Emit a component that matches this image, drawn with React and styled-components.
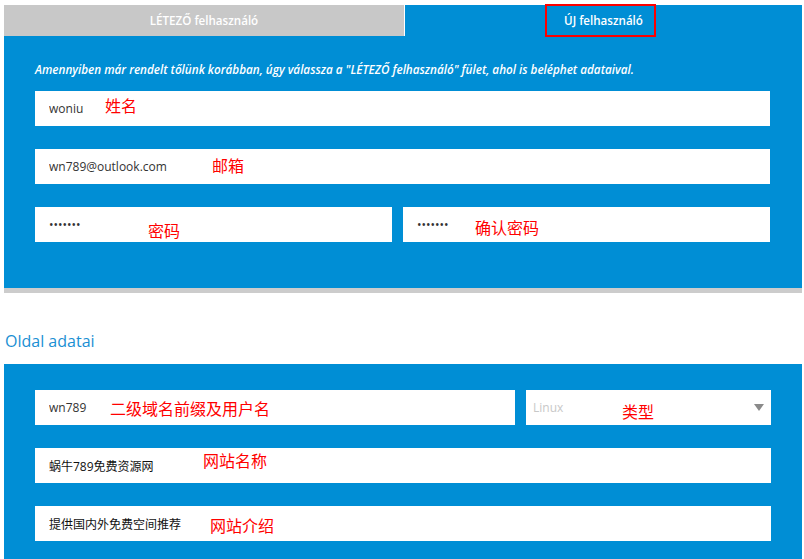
import React from "react";
import styled, { createGlobalStyle } from "styled-components";

const GlobalStyle = createGlobalStyle`
  body {
    margin: 0;
    background: #ffffff;
    font-family: "Open Sans", "Noto Sans CJK SC", sans-serif;
  }
`;

const BLUE = "#008ed5";

const Page = styled.div`
  padding: 5px 2px 0 4px;
`;

const Tabs = styled.div`
  display: flex;
  gap: 1px;
`;

const Tab = styled.div`
  position: relative;
  width: ${(props) => props.width}px;
  height: 31px;
  display: flex;
  align-items: center;
  justify-content: center;
  background: ${(props) => (props.active ? BLUE : "#c8c8c8")};
  color: #ffffff;
  font-size: 11.6px;
  font-weight: 600;
`;

/* piros keret a kiemelt fül körül */
const Highlight = styled.span`
  position: absolute;
  left: 140px;
  top: -1px;
  width: 111px;
  height: 33px;
  box-sizing: border-box;
  border: 2px solid #ff0000;
`;

const Panel = styled.div`
  background: ${BLUE};
  padding: ${(props) => props.pad};
  box-shadow: ${(props) => (props.shadow ? "0 5px 0 #cccccc" : "none")};
`;

const Notice = styled.p`
  margin: 0 0 14px;
  color: #ffffff;
  font-size: 11.7px;
  line-height: 16px;
  font-style: italic;
  font-weight: 600;
`;

const Rows = styled.div`
  display: grid;
  gap: 23px;
`;

const Row = styled.div`
  display: grid;
  grid-template-columns: ${(props) => props.cols || "1fr"};
  gap: ${(props) => props.gap || 0}px;
`;

const Field = styled.div`
  position: relative;
  height: 35px;
  background: #ffffff;
`;

const Input = styled.input`
  display: block;
  width: 100%;
  height: 100%;
  box-sizing: border-box;
  border: none;
  outline: none;
  background: transparent;
  padding: 0 14px;
  font-family: "Open Sans", "Noto Sans CJK SC", sans-serif;
  font-size: 12px;
  color: ${(props) => (props.dark ? "#111111" : "#333333")};
`;

const SelectBox = styled.div`
  height: 100%;
  display: flex;
  align-items: center;
  justify-content: space-between;
  padding: 0 7px;
  font-size: 12px;
  color: #c8c8c8;
`;

const Note = styled.span`
  position: absolute;
  left: ${(props) => props.x}px;
  top: ${(props) => props.y}px;
  font-family: "Noto Sans CJK SC", sans-serif;
  font-size: 16px;
  line-height: 16px;
  color: #ff0000;
  pointer-events: none;
  white-space: nowrap;
`;

const SectionTitle = styled.h2`
  margin: 42px 0 12px 1px;
  font-size: 16px;
  line-height: 22px;
  font-weight: 400;
  color: #1a8fd3;
`;

const Arrow = () => (
  <svg width="10" height="7" viewBox="0 0 10 7">
    <path d="M0 0 L10 0 L5 7 Z" fill="#8a8a8a" />
  </svg>
);

const App = () => {
  return (
    <>
      <GlobalStyle />
      <Page>
        <Tabs>
          <Tab width={400}>LÉTEZŐ felhasználó</Tab>
          <Tab width={397} active>
            ÚJ felhasználó
            <Highlight />
          </Tab>
        </Tabs>

        <Panel pad="25px 32px 46px 31px" shadow>
          <Notice>
            Amennyiben már rendelt tőlünk korábban, úgy válassza a "LÉTEZŐ
            felhasználó" fület, ahol is beléphet adataival.
          </Notice>
          <Rows>
            <Row>
              <Field>
                <Input defaultValue="woniu" />
                <Note x={70} y={6}>姓名</Note>
              </Field>
            </Row>
            <Row>
              <Field>
                <Input defaultValue="wn789@outlook.com" />
                <Note x={177} y={8}>邮箱</Note>
              </Field>
            </Row>
            <Row cols="357px 1fr" gap={11}>
              <Field>
                <Input type="password" defaultValue="1234567" />
                <Note x={113} y={15}>密码</Note>
              </Field>
              <Field>
                <Input type="password" defaultValue="1234567" />
                <Note x={72} y={12}>确认密码</Note>
              </Field>
            </Row>
          </Rows>
        </Panel>

        <SectionTitle>Oldal adatai</SectionTitle>

        <Panel pad="26px 31px 30px 31px">
          <Rows>
            <Row cols="480px 1fr" gap={11}>
              <Field>
                <Input defaultValue="wn789" />
                <Note x={75} y={10}>二级域名前缀及用户名</Note>
              </Field>
              <Field>
                <SelectBox>
                  <span>Linux</span>
                  <Arrow />
                </SelectBox>
                <Note x={96} y={13}>类型</Note>
              </Field>
            </Row>
            <Row>
              <Field>
                <Input dark defaultValue="蜗牛789免费资源网" />
                <Note x={168} y={4}>网站名称</Note>
              </Field>
            </Row>
            <Row>
              <Field>
                <Input dark defaultValue="提供国内外免费空间推荐" />
                <Note x={175} y={11}>网站介绍</Note>
              </Field>
            </Row>
          </Rows>
        </Panel>
      </Page>
    </>
  );
};

export default App;
